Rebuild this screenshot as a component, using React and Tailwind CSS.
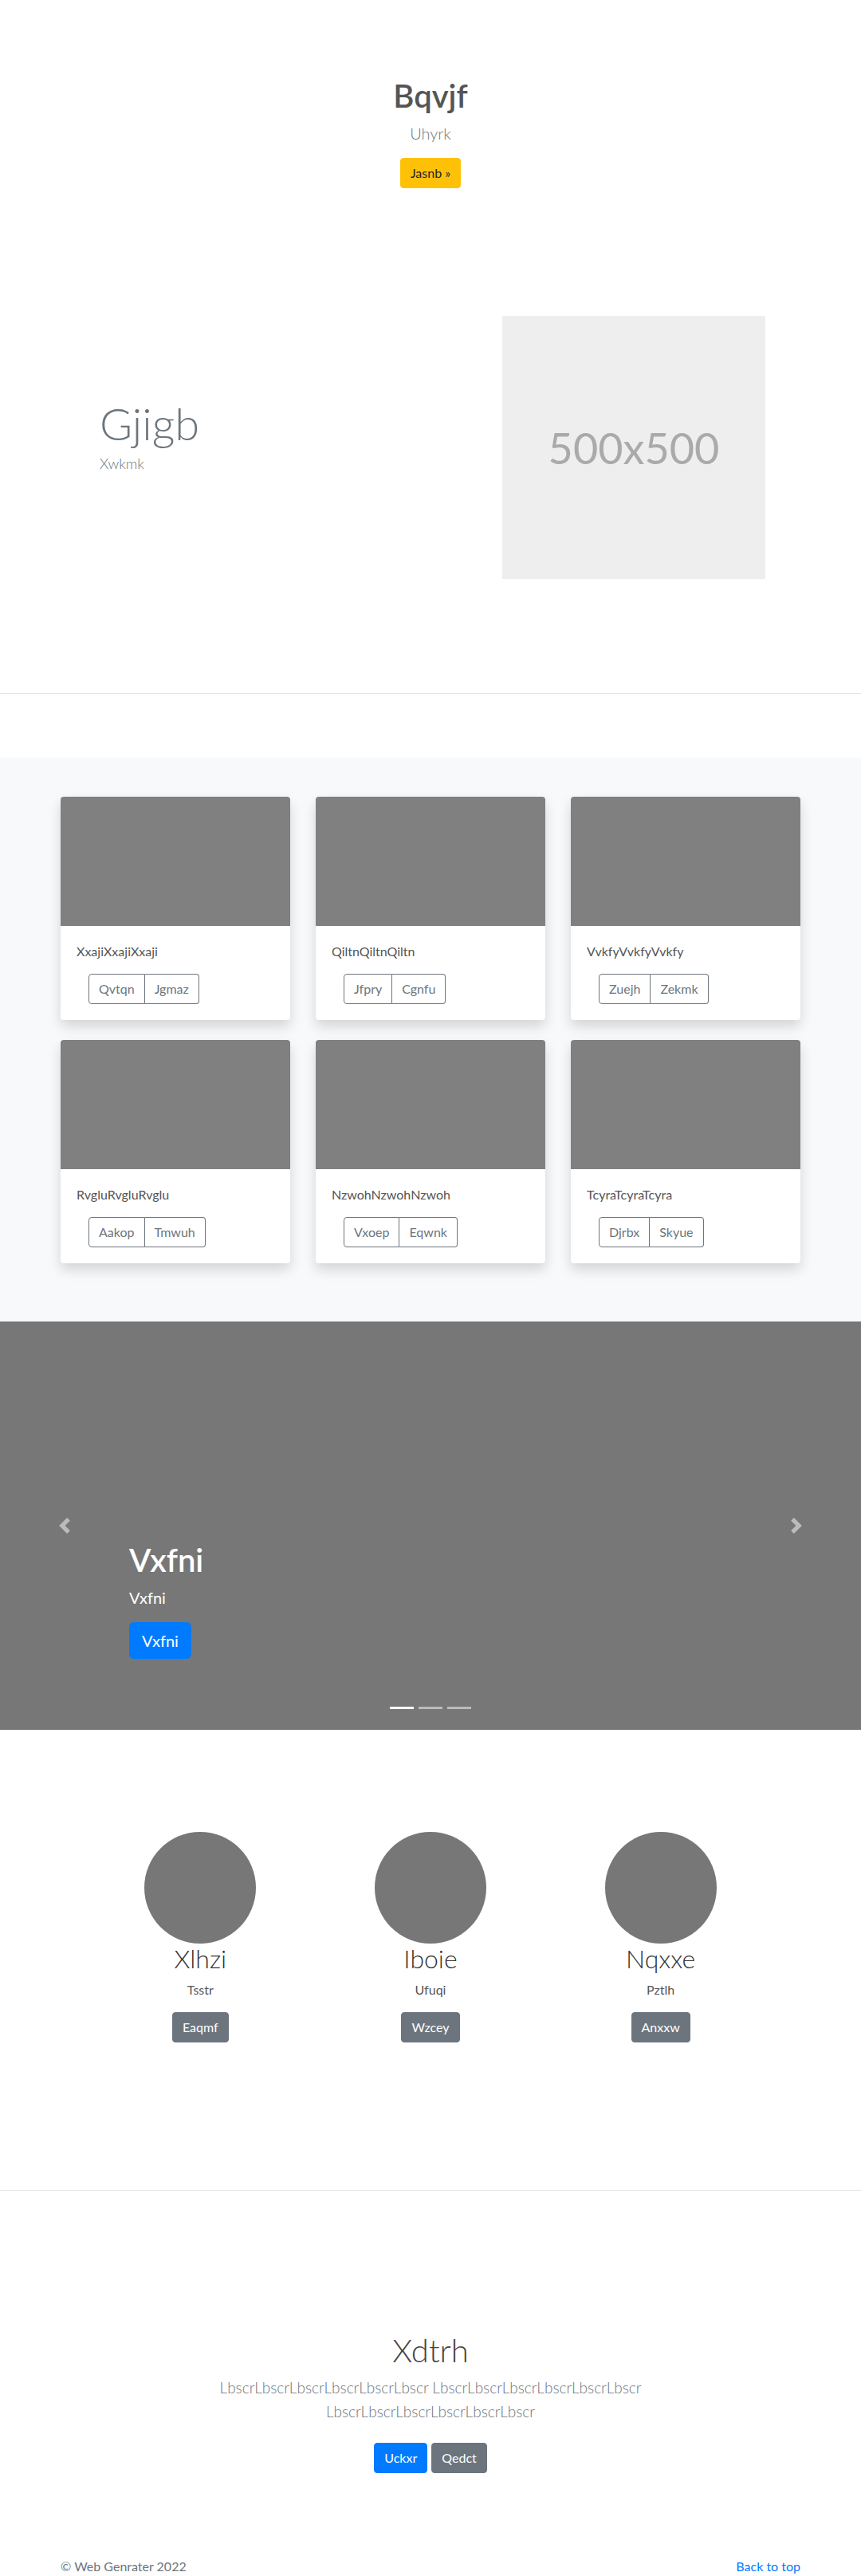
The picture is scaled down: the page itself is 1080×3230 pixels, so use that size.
import React from "react";

const cards = [
  { title: "XxajiXxajiXxaji", a: "Qvtqn", b: "Jgmaz" },
  { title: "QiltnQiltnQiltn", a: "Jfpry", b: "Cgnfu" },
  { title: "VvkfyVvkfyVvkfy", a: "Zuejh", b: "Zekmk" },
  { title: "RvgluRvgluRvglu", a: "Aakop", b: "Tmwuh" },
  { title: "NzwohNzwohNzwoh", a: "Vxoep", b: "Eqwnk" },
  { title: "TcyraTcyraTcyra", a: "Djrbx", b: "Skyue" },
];

const people = [
  { name: "Xlhzi", sub: "Tsstr", btn: "Eaqmf" },
  { name: "Iboie", sub: "Ufuqi", btn: "Wzcey" },
  { name: "Nqxxe", sub: "Pztlh", btn: "Anxxw" },
];

const Chevron = ({ right }) => (
  <svg width="20" height="20" viewBox="0 0 8 8" fill="#fff" className="opacity-50">
    {right ? (
      <path d="M2.75 0l-1.5 1.5 2.5 2.5-2.5 2.5 1.5 1.5 4-4-4-4z" />
    ) : (
      <path d="M5.25 0l-4 4 4 4 1.5-1.5-2.5-2.5 2.5-2.5-1.5-1.5z" />
    )}
  </svg>
);

const Card = ({ title, a, b }) => (
  <div className="bg-white rounded overflow-hidden shadow-[0_8px_16px_rgba(0,0,0,0.15)]">
    <div className="h-[162px] bg-[#808080]" />
    <div className="p-5">
      <p className="text-base leading-6 text-[#555] mb-4">{title}</p>
      <div className="ml-[15px] inline-flex">
        <button className="border border-[#6c757d] text-[#6c757d] px-3 py-1.5 leading-6 text-base rounded-l">
          {a}
        </button>
        <button className="border border-l-0 border-[#6c757d] text-[#6c757d] px-3 py-1.5 leading-6 text-base rounded-r">
          {b}
        </button>
      </div>
    </div>
  </div>
);

const App = () => {
  return (
    <div className="min-h-screen bg-white text-[#212529]" style={{ fontFamily: 'Lato, "Open Sans", sans-serif' }}>
      {/* intro */}
      <section className="pt-[96px] text-center">
        <h1 className="text-[40px] leading-[48px] font-semibold text-[#555]">Bqvjf</h1>
        <p className="mt-2 text-[20px] leading-[30px] font-light text-[#6c757d]">Uhyrk</p>
        <button className="mt-4 bg-[#ffc107] text-[#212529] text-base leading-6 px-3 py-1.5 rounded border border-[#ffc107]">
          Jasnb »
        </button>
      </section>

      {/* feature */}
      <section className="mt-[160px] w-[928px] mx-auto flex items-start">
        <div className="ml-[49px] mt-[101px]">
          <h2 className="text-[56px] leading-[67px] font-light text-[#6c757d]">Gjigb</h2>
          <p className="mt-[5px] text-[18px] leading-6 font-light text-[#6c757d]">Xwkmk</p>
        </div>
        <div className="ml-auto mr-[44px] w-[330px] h-[330px] bg-[#eeeeee] flex items-center justify-center">
          <span className="text-[54px] text-[#aaaaaa]">500x500</span>
        </div>
      </section>

      <hr className="mt-[143px] border-0 border-t border-[#e5e5e5]" />

      {/* album */}
      <section className="mt-[80px] bg-[#f8f9fa] pt-[49px] pb-[73px]">
        <div className="w-[928px] mx-auto grid grid-cols-3 gap-x-8 gap-y-[25px]">
          {cards.map((c) => (
            <Card key={c.title} {...c} />
          ))}
        </div>
      </section>

      {/* carousel */}
      <section className="relative h-[512px] bg-[#777777] flex flex-col justify-end pl-[162px] pb-[89px]">
        <h2 className="text-[40px] leading-[48px] font-semibold text-white">Vxfni</h2>
        <p className="mt-2 text-[20px] leading-[30px] text-white">Vxfni</p>
        <div className="mt-4">
          <button className="bg-[#007bff] text-white text-[20px] leading-[30px] px-4 py-2 rounded-md">Vxfni</button>
        </div>
        <div className="absolute left-0 top-0 h-full w-[15%] flex items-center justify-center">
          <Chevron />
        </div>
        <div className="absolute right-0 top-0 h-full w-[15%] flex items-center justify-center">
          <Chevron right />
        </div>
        <div className="absolute bottom-[26px] left-0 right-0 flex justify-center gap-[6px]">
          <span className="w-[30px] h-[3px] bg-white" />
          <span className="w-[30px] h-[3px] bg-white opacity-50" />
          <span className="w-[30px] h-[3px] bg-white opacity-50" />
        </div>
      </section>

      {/* marketing */}
      <section className="pt-[128px] w-[866px] mx-auto grid grid-cols-3 text-center">
        {people.map((p) => (
          <div key={p.name} className="flex flex-col items-center">
            <div className="w-[140px] h-[140px] rounded-full bg-[#777777]" />
            <h2 className="text-[32px] leading-[38px] font-light text-[#333]">{p.name}</h2>
            <p className="mt-2 text-base leading-6 text-[#555]">{p.sub}</p>
            <button className="mt-4 bg-[#6c757d] text-white text-base leading-6 px-3 py-1.5 rounded border border-[#6c757d]">
              {p.btn}
            </button>
          </div>
        ))}
      </section>

      <hr className="mt-[185px] border-0 border-t border-[#e5e5e5]" />

      {/* jumbotron */}
      <section className="pt-[176px] text-center">
        <h1 className="text-[40px] leading-[48px] font-light text-[#444]">Xdtrh</h1>
        <p className="mt-2 mx-auto max-w-[700px] text-[19px] leading-[30px] font-light text-[#6c757d]">
          LbscrLbscrLbscrLbscrLbscrLbscr LbscrLbscrLbscrLbscrLbscrLbscr LbscrLbscrLbscrLbscrLbscrLbscr
        </p>
        <div className="mt-[24px] flex justify-center gap-[5px]">
          <button className="bg-[#007bff] text-white text-base leading-6 px-3 py-1.5 rounded border border-[#007bff]">
            Uckxr
          </button>
          <button className="bg-[#6c757d] text-white text-base leading-6 px-3 py-1.5 rounded border border-[#6c757d]">
            Qedct
          </button>
        </div>
      </section>

      {/* footer */}
      <footer className="w-[928px] mx-auto pt-[105px] flex justify-between text-base leading-6">
        <p className="text-[#6c757d]">© Web Genrater 2022</p>
        <a href="#" className="text-[#007bff]">Back to top</a>
      </footer>
    </div>
  );
};

export default App;
